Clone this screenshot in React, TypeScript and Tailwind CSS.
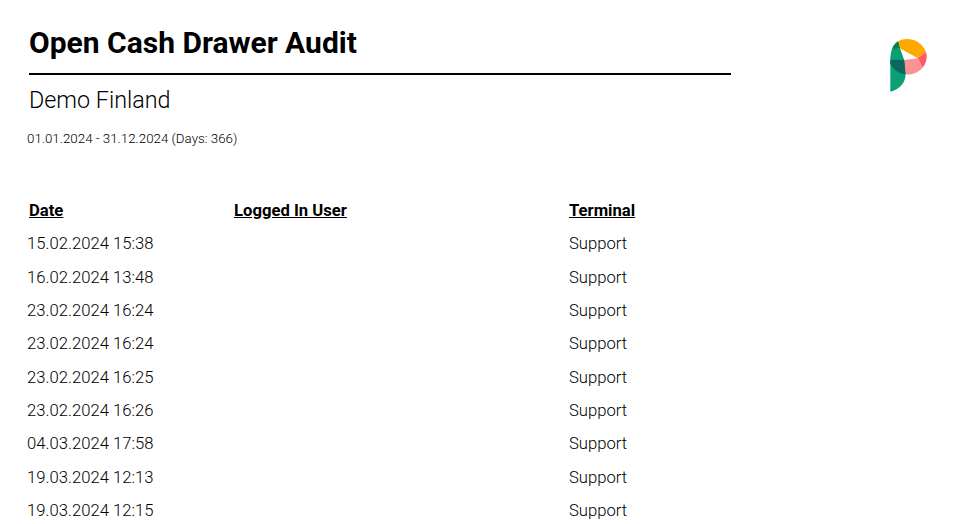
const rows = [
  '15.02.2024 15:38',
  '16.02.2024 13:48',
  '23.02.2024 16:24',
  '23.02.2024 16:24',
  '23.02.2024 16:25',
  '23.02.2024 16:26',
  '04.03.2024 17:58',
  '19.03.2024 12:13',
  '19.03.2024 12:15',
];

function Logo() {
  return (
    <svg className="absolute left-[871px] top-[25px]" width="70" height="75" viewBox="0 0 210 225">
      <path d="M58 105 L58 200 C85 194 103 175 104 148 L100 105 Z" fill="#0a9f74" />
      <path d="M58 105 C58 92 60 80 63 72 L88 71 L100 105 Z" fill="#0a9f74" />
      <path d="M63 72 C66 62 73 54 82 48 L88 71 Z" fill="#0c7f3a" />
      <path d="M82 48 C105 36 145 38 165 80 L140 100 L88 71 Z" fill="#ffa900" />
      <path d="M88 71 L140 100 L100 105 Z" fill="#ffffff" />
      <path d="M140 100 L165 81 C170 96 166 114 155 128 Z" fill="#fb5a66" />
      <path d="M100 105 L140 100 L155 128 C142 142 125 150 104 148 Z" fill="#fd9391" />
      <path d="M58 104 L100 105 L104 148 C84 146 68 134 58 116 Z" fill="#0e6460" />
    </svg>
  );
}

export default function App() {
  return (
    <div className="relative h-[524px] w-[971px] overflow-hidden bg-white font-['Roboto',sans-serif] text-black">
      <Logo />
      <div className="pl-[29px] pt-[25px]">
        <h1 className="h-[36px] text-[30px] leading-[36px] font-bold">Open Cash Drawer Audit</h1>
        <div className="mt-[12px] h-[2px] w-[702px] bg-black" />
        <div className="mt-[11px] text-[23.33px] leading-[28px] font-light">Demo Finland</div>
        <div className="mt-[17px] -ml-[2px] text-[13.33px] leading-[16px] font-light">
          01.01.2024 - 31.12.2024 (Days: 366)
        </div>
        <div className="mt-[54px] flex h-[20px] text-[16.67px] leading-[20px] font-bold underline">
          <div className="w-[205px]">Date</div>
          <div className="w-[335px]">Logged In User</div>
          <div>Terminal</div>
        </div>
        <div className="mt-[6.4px] flex flex-col text-[16.67px] leading-[33.33px] font-light">
          {rows.map((date, i) => (
            <div key={i} className="flex">
              <div className="-ml-[2px] w-[542px]">{date}</div>
              <div>Support</div>
            </div>
          ))}
        </div>
      </div>
    </div>
  );
}
